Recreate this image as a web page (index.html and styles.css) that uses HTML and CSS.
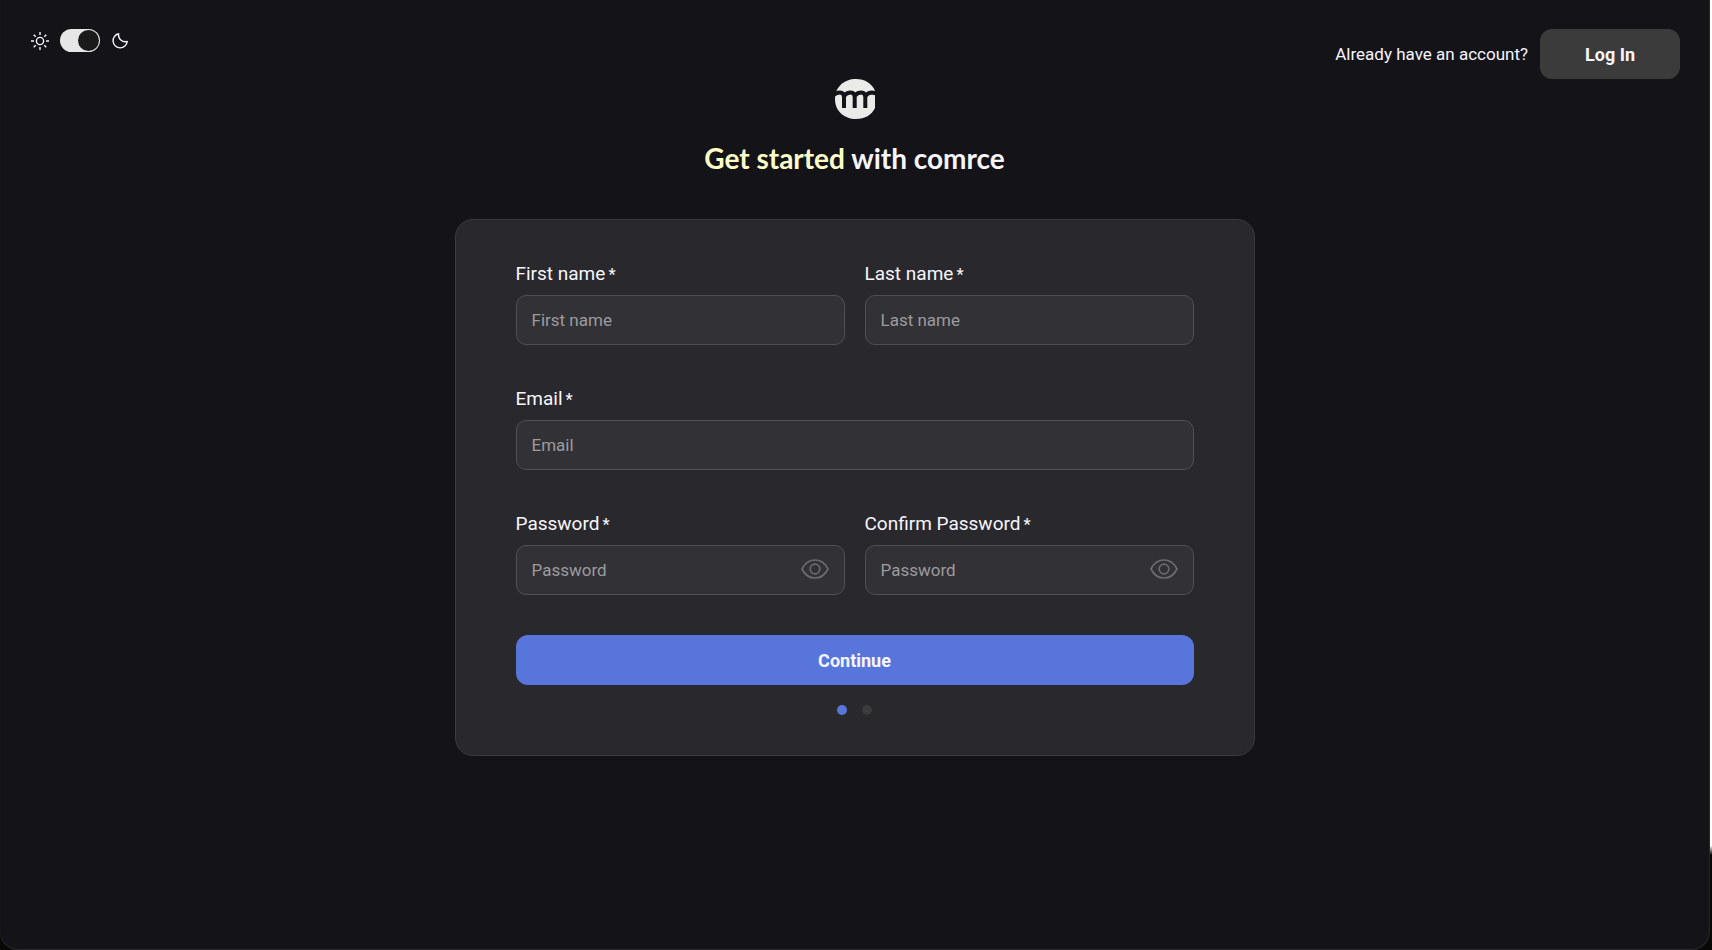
FILE: index.html
```html
<!DOCTYPE html>
<html lang="en">
<head>
    <meta charset="UTF-8">
    <meta name="viewport" content="width=device-width, initial-scale=1">
    <title>comrce - Sign up</title>
    <link rel="stylesheet" href="styles.css">
</head>
<body>
    <div class="page">
        <header class="header">
            <div class="theme">
                <svg class="theme-icon" viewBox="0 0 20 20" aria-hidden="true">
                    <circle cx="10" cy="10" r="3.6"/>
                    <path d="M10 1v3M10 16v3M1 10h3M16 10h3M3.7 3.7l2 2M14.3 14.3l2 2M3.7 16.3l2-2M14.3 5.7l2-2"/>
                </svg>
                <input type="checkbox" class="theme-switch" id="theme" aria-label="Dark mode" checked>
                <svg class="theme-icon" viewBox="0 0 20 20" aria-hidden="true">
                    <path d="M8.6 2.8A7.1 7.1 0 1 0 17.2 10.4C13 11.8 8 8.6 8.6 2.8Z" stroke-linejoin="round"/>
                </svg>
            </div>
            <div class="login">
                <span>Already have an account?</span>
                <button type="button" class="btn btn-login">Log In</button>
            </div>
        </header>

        <main class="main">
            <svg class="logo" viewBox="0 0 40 40" role="img" aria-label="comrce">
                <path fill="#eaeae8" d="M21 0C30 0 37 4.5 40 12V29C36.5 36 30 40 21 40C9 40 0 32 0 20S9 0 21 0Z"/>
                <g fill="none" stroke="#141318" stroke-width="4">
                    <path d="M-1 15.5Q2 13.5 5 13.5Q9 13.5 9 18V29"/>
                    <path d="M9 17Q11.5 13.5 15.7 13.5Q19.7 13.5 19.7 18V29"/>
                    <path d="M19.7 17Q22 13.5 26.3 13.5Q30.3 13.5 30.3 18V29"/>
                    <path d="M30.3 17Q33 13.5 37 13.5L42 14.5"/>
                </g>
            </svg>
            <h1><span class="accent">Get started</span> with comrce</h1>

            <form class="card">
                <div class="row">
                    <div class="field">
                        <label for="firstName">First name<span class="req">*</span></label>
                        <input type="text" id="firstName" placeholder="First name">
                    </div>
                    <div class="field">
                        <label for="lastName">Last name<span class="req">*</span></label>
                        <input type="text" id="lastName" placeholder="Last name">
                    </div>
                </div>
                <div class="row">
                    <div class="field">
                        <label for="email">Email<span class="req">*</span></label>
                        <input type="email" id="email" placeholder="Email">
                    </div>
                </div>
                <div class="row">
                    <div class="field">
                        <label for="password">Password<span class="req">*</span></label>
                        <div class="password">
                            <input type="password" id="password" placeholder="Password">
                            <button type="button" class="eye" aria-label="Show password">
                                <svg viewBox="0 0 28 20"><path d="M1 10C4 4 9 1 14 1S24 4 27 10C24 16 19 19 14 19S4 16 1 10Z"/><circle cx="14" cy="10" r="4.8"/></svg>
                            </button>
                        </div>
                    </div>
                    <div class="field">
                        <label for="confirm">Confirm Password<span class="req">*</span></label>
                        <div class="password">
                            <input type="password" id="confirm" placeholder="Password">
                            <button type="button" class="eye" aria-label="Show password">
                                <svg viewBox="0 0 28 20"><path d="M1 10C4 4 9 1 14 1S24 4 27 10C24 16 19 19 14 19S4 16 1 10Z"/><circle cx="14" cy="10" r="4.8"/></svg>
                            </button>
                        </div>
                    </div>
                </div>
                <button type="submit" class="btn btn-continue">Continue</button>
                <div class="steps">
                    <span class="dot active"></span>
                    <span class="dot"></span>
                </div>
            </form>
        </main>
    </div>
</body>
</html>
```
FILE: styles.css
```css
* {
    box-sizing: border-box;
}
html {
    background: linear-gradient(#fff 89%, #080807 90%);
}
body {
    margin: 0;
    color: #f7f5fd;
    font-family: Roboto, "Liberation Sans", sans-serif;
    font-size: 17px;
}
.page {
    min-height: 100vh;
    margin-right: 2px;
    background: #141318;
    border-right: 1px solid #242328;
    border-radius: 0 0 18px 18px;
    box-shadow: inset 0 -1px 1px #2c2a31;
}
.header {
    display: flex;
    justify-content: space-between;
    align-items: flex-start;
    padding: 29px 29px 0 30px;
}
.theme {
    display: flex;
    align-items: center;
    gap: 10px;
}
.theme-icon {
    width: 20px;
    height: 20px;
    fill: none;
    stroke: #f7f5fd;
    stroke-width: 1.4;
}
.theme-switch {
    appearance: none;
    display: flex;
    justify-content: flex-end;
    width: 40px;
    height: 23px;
    margin: 0;
    padding: 1px;
    background: #e6e6e6;
    border-radius: 12px;
    cursor: pointer;
}
.theme-switch::before {
    content: "";
    width: 21px;
    height: 21px;
    background: #1a1a1a;
    border-radius: 50%;
}
.login {
    display: flex;
    align-items: center;
    gap: 12px;
}
.btn {
    height: 50px;
    padding: 0;
    border: none;
    border-radius: 12px;
    color: #f7f5fd;
    font-family: inherit;
    font-size: 18px;
    font-weight: bold;
    cursor: pointer;
}
.btn-login {
    width: 140px;
    background: #3b3b3b;
}
.main {
    display: flex;
    flex-direction: column;
    align-items: center;
}
.logo {
    width: 40px;
    height: 40px;
}
h1 {
    margin: 19px 0 41px;
    font-family: Lato, sans-serif;
    font-size: 28px;
    font-weight: bold;
    line-height: 40px;
}
.accent {
    color: #ffffc8;
}
.card {
    display: flex;
    flex-direction: column;
    gap: 40px;
    width: 100%;
    max-width: 800px;
    padding: 40px 60px;
    background: #29282d;
    border: 1px solid #3b3a3f;
    border-radius: 18px;
}
.row {
    display: flex;
    gap: 20px;
}
.field {
    display: flex;
    flex: 1;
    flex-direction: column;
    gap: 8px;
}
label {
    font-size: 19px;
    line-height: 27px;
}
.req {
    margin-left: 3px;
    font-size: 16px;
    font-weight: 500;
    line-height: 1;
}
.field input {
    width: 100%;
    height: 50px;
    padding: 0 15px;
    background: #323136;
    border: 1px solid #504f54;
    border-radius: 10px;
    color: #f7f5fd;
    font-family: inherit;
    font-size: 17px;
}
.field input::placeholder {
    color: #9c9b9e;
}
.password {
    position: relative;
}
.eye {
    position: absolute;
    top: 14px;
    right: 16px;
    width: 28px;
    height: 20px;
    padding: 0;
    background: none;
    border: none;
    cursor: pointer;
}
.eye svg {
    display: block;
    fill: none;
    stroke: #6b6a6e;
    stroke-width: 1.7;
}
.btn-continue {
    background: #5875dc;
}
.steps {
    display: flex;
    justify-content: center;
    gap: 15px;
    margin-top: -20px;
}
.dot {
    width: 10px;
    height: 10px;
    background: #3b3b3b;
    border-radius: 50%;
}
.dot.active {
    background: #5875dc;
}
```
